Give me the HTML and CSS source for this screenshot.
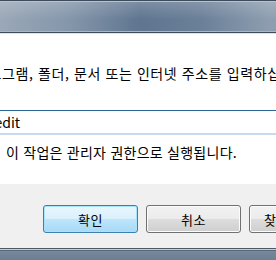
FILE: index.html
```html
<!DOCTYPE html>
<html lang="ko">
<head>
	<meta charset="UTF-8" />
	<title>실행</title>
	<link rel="stylesheet" href="styles.css">
</head>
<body>
	<div class="window">
		<div class="titlebar"></div>
		<div class="client">
			<p class="prompt">프로그램, 폴더, 문서 또는 인터넷 주소를 입력하십시오.</p>
			<div class="open-row">
				<input class="open-input" type="text" value="regedit" />
			</div>
			<p class="admin">
				<span class="shield"></span>
				이 작업은 관리자 권한으로 실행됩니다.
			</p>
		</div>
		<div class="footer">
			<button class="btn btn-default">확인</button>
			<button class="btn">취소</button>
			<button class="btn btn-browse">찾아보기(B)...</button>
		</div>
		<div class="frame-bottom"></div>
	</div>
</body>
</html>
```
FILE: styles.css
```css
* {
	padding: 0;
	margin: 0;
	box-sizing: border-box;
}

body {
	width: 276px;
	height: 260px;
	overflow: hidden;
	background-color: #8797aa;
	font-family: "Noto Sans CJK KR", "Liberation Sans", sans-serif;
	font-size: 14px;
	letter-spacing: .25px;
	color: #000;
}

/* 창 전체: 왼쪽이 잘린 상태 */
.window {
	width: 420px;
	margin-left: -60px;
}

.titlebar {
	height: 33px;
	border-top: 1px solid #3e4b5b;
	border-bottom: 1px solid #3f4c5c;
	box-shadow: inset 0 1px 0 #b8c3cf, inset 0 -1px 0 #aab6c3;
	background:
		linear-gradient(to bottom, rgba(255, 255, 255, .18), rgba(255, 255, 255, 0) 60%),
		linear-gradient(to right, #9aa8b8 60px, #8496aa 130px, #5f7590 200px, #6a7f98 260px, #8e9eb0 330px);
}

.client {
	height: 151px;
	padding-top: 30px;
	background-color: #fff;
	border-top: 1px solid #dfe4ea;
}

.prompt {
	margin-left: 35px;
	line-height: 18px;
	letter-spacing: .6px;
	white-space: nowrap;
}

.open-row {
	margin-top: 28px;
	margin-left: 29px;
}

.open-input {
	width: 370px;
	height: 25px;
	padding: 0 4px 1px 4px;
	font: inherit;
	color: #000;
	outline: 0;
	border: 1px solid #a4c9e3;
	border-top-color: #2b6593;
	border-bottom: 2px solid #c6dcee;
}

.admin {
	display: flex;
	align-items: center;
	gap: 10px;
	margin-top: 8px;
	margin-left: 40px;
	line-height: 18px;
	white-space: nowrap;
}

.shield {
	flex-shrink: 0;
	width: 16px;
	height: 16px;
	background: linear-gradient(to right, #3b6fc2 50%, #f2c232 50%);
	border-radius: 2px 2px 8px 8px;
}

.footer {
	display: flex;
	gap: 8px;
	height: 64px;
	padding: 21px 0 0 103px;
	background-color: #f0f0f0;
}

.btn {
	flex-shrink: 0;
	width: 95px;
	height: 28px;
	font: inherit;
	font-size: 13px;
	letter-spacing: .5px;
	color: #000;
	border: 1px solid #707070;
	border-radius: 3px;
	box-shadow: inset 0 0 0 1px #fcfcfc;
	background: linear-gradient(to bottom, #f2f2f2 0%, #ebebeb 50%, #dddddd 50%, #cfcfcf 100%);
}

.btn-default {
	border-color: #3c7fb1;
	box-shadow: inset 0 0 0 1px #a7e4fc;
	background: linear-gradient(to bottom, #eaf6fd 0%, #d9f0fc 50%, #bee6fd 50%, #a7d9f5 100%);
}

.btn-browse {
	padding-left: 14px;
	text-align: left;
	white-space: nowrap;
}

.frame-bottom {
	height: 12px;
	border-top: 1px solid #4d5968;
	box-shadow: inset 0 1px 0 #c4ccd6, inset 0 2px 0 #5a6779;
	background: linear-gradient(to bottom, #7a8ba0, #6d7e93);
}
```
